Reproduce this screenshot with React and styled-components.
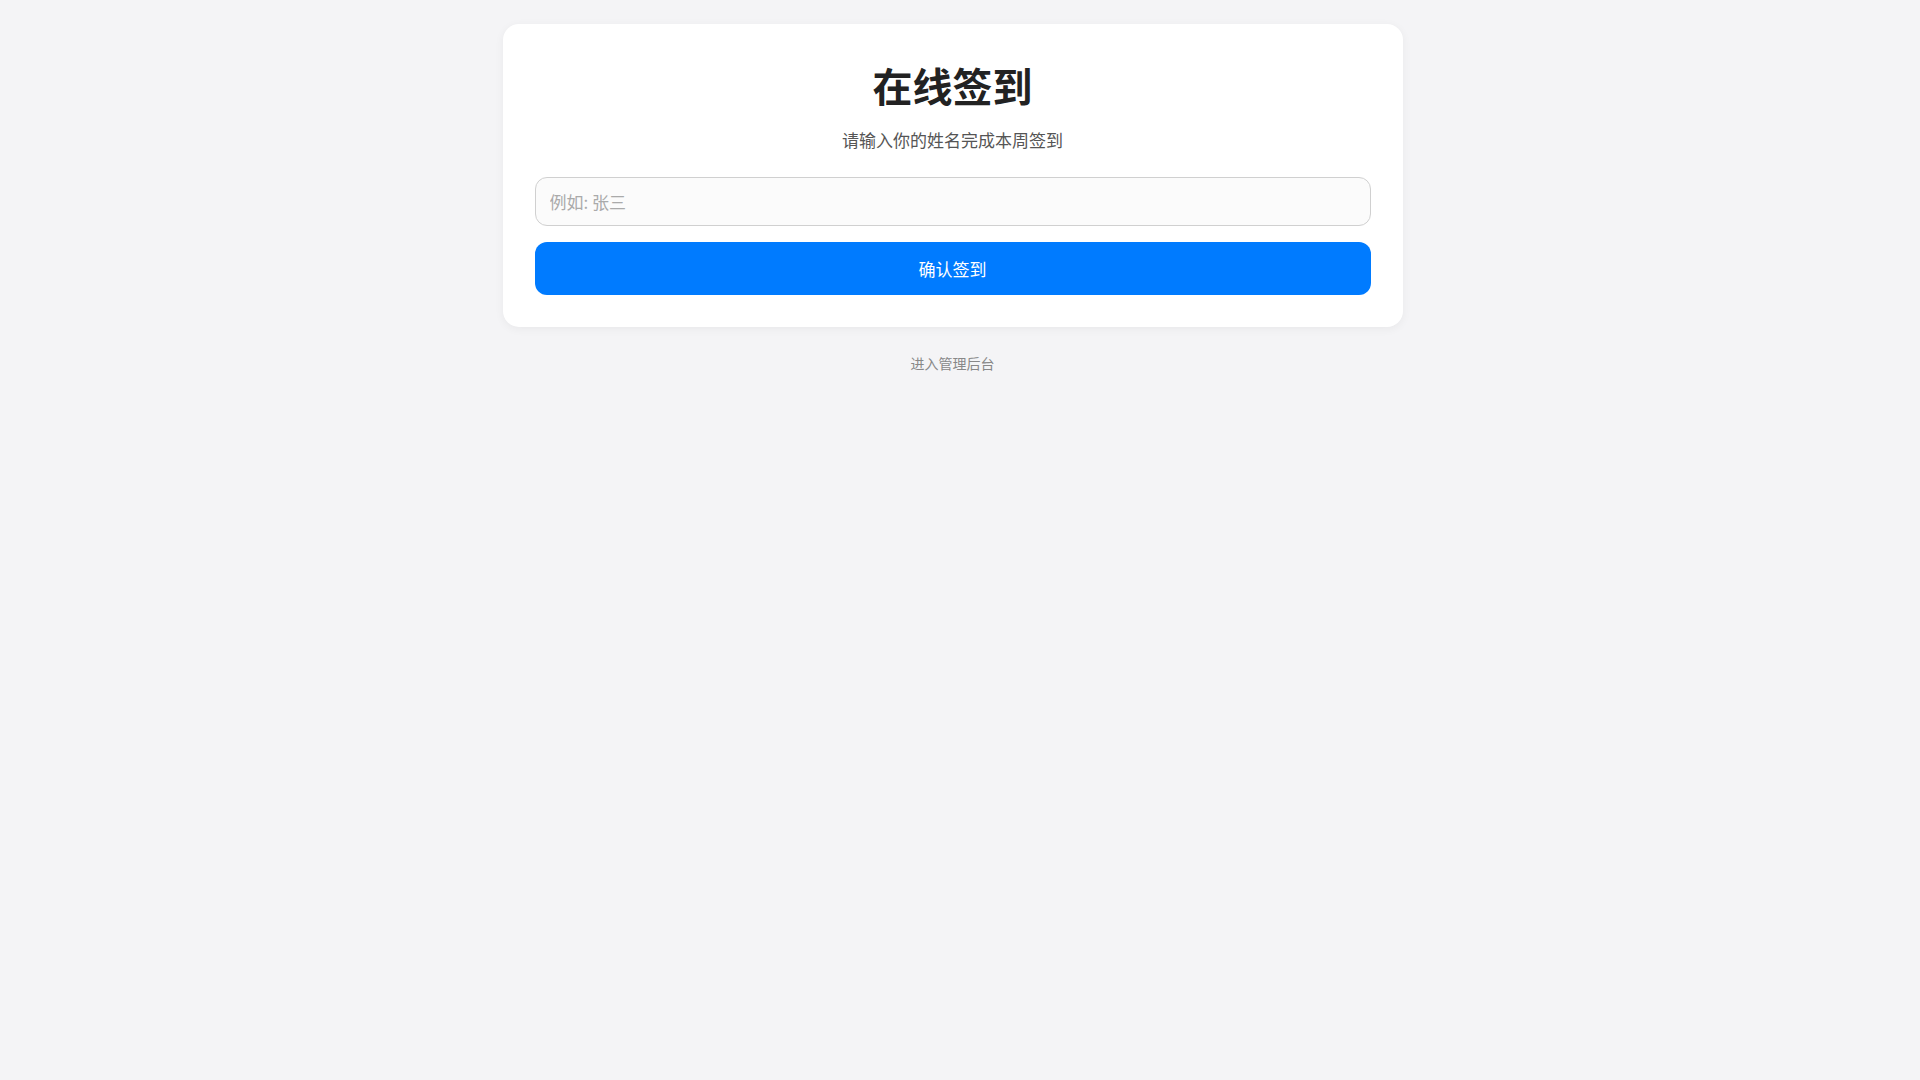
import React, { useState } from 'react';
import styled, { createGlobalStyle } from 'styled-components';

const GlobalStyle = createGlobalStyle`
	html {
		overflow-y: scroll;
	}
	html, body {
		margin: 0;
	}
	body {
		padding: 24px 35px 16px 20px;
		min-height: 100vh;
		background: #f4f4f6;
		font-family: "Noto Sans CJK SC", "Noto Sans", sans-serif;
	}
`;

export default function App() {
	const [name, setName] = useState('');

	return (
		<>
			<GlobalStyle />
			<Page>
				<Card>
					<Title>在线签到</Title>
					<Subtitle>请输入你的姓名完成本周签到</Subtitle>
					<NameInput
						type="text"
						placeholder="例如: 张三"
						value={name}
						onChange={(e) => setName(e.target.value)}
					/>
					<SubmitButton type="button">确认签到</SubmitButton>
				</Card>
				<AdminLink href="#admin">进入管理后台</AdminLink>
			</Page>
		</>
	);
}

const Page = styled.div`
	display: flex;
	flex-direction: column;
	align-items: center;
`;

const Card = styled.div`
	box-sizing: border-box;
	width: 100%;
	max-width: 900px;
	background: #fff;
	border-radius: 16px;
	padding: 32px;
	box-shadow: 0 2px 10px rgba(0, 0, 0, 0.05);
	display: flex;
	flex-direction: column;
	align-items: stretch;
`;

const Title = styled.h1`
	margin: 0;
	font-size: 40px;
	line-height: 58px;
	font-weight: 700;
	color: #222;
	text-align: center;
`;

const Subtitle = styled.p`
	margin: 14px 0 25px;
	font-size: 17px;
	line-height: 24px;
	color: #555;
	text-align: center;
`;

const NameInput = styled.input`
	box-sizing: border-box;
	width: 100%;
	height: 49px;
	padding: 0 14px;
	font-family: inherit;
	font-size: 17px;
	border: 1px solid #d0d0d0;
	border-radius: 12px;
	background: #fbfbfb;
	color: #333;
	outline: none;

	&::placeholder {
		color: #aaa;
	}
`;

const SubmitButton = styled.button`
	margin-top: 16px;
	width: 100%;
	height: 53px;
	border: none;
	border-radius: 12px;
	background: #007bff;
	color: #fff;
	font-family: inherit;
	font-size: 17px;
	cursor: pointer;
`;

const AdminLink = styled.a`
	margin-top: 26px;
	font-size: 14px;
	line-height: 20px;
	color: #888;
	text-decoration: none;
`;
